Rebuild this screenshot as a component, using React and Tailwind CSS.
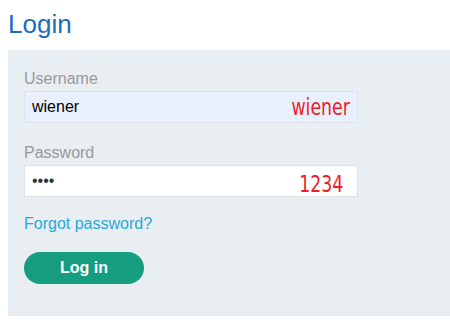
export default function App() {
  return (
    <div className="min-h-screen bg-white pl-2" style={{ fontFamily: '"Liberation Sans", Arial, sans-serif' }}>
      <h1 className="pt-[9px] text-[26px] leading-[30px] font-normal text-[#1a6dbd]">Login</h1>

      <div className="mt-[11px] bg-[#e8eef1] pl-4 pt-[17px] pb-8">
        <Field label="Username">
          <input
            readOnly
            value="wiener"
            className="h-8 w-[334px] border border-[#dde3e7] bg-[#e8f0fe] pl-[7px] text-[16px] text-black outline-none"
          />
          <Note className="right-2 top-[5px]">wiener</Note>
        </Field>

        <div className="mt-[18px]">
          <Field label="Password">
            <input
              readOnly
              type="password"
              value="1234"
              className="h-8 w-[334px] border border-[#dde3e7] bg-white pl-[7px] text-[16px] text-[#333] outline-none"
            />
            <Note className="right-[15px] top-[8px]">1234</Note>
          </Field>
        </div>

        <a href="#" className="mt-[15px] block w-fit text-[16px] leading-6 text-[#2aa7e0]">
          Forgot password?
        </a>

        <button className="mt-4 h-8 w-[120px] rounded-full bg-[#169c7f] text-[16px] font-bold text-white">
          Log in
        </button>
      </div>
    </div>
  )
}

function Field({ label, children }) {
  return (
    <div>
      <label className="block text-[16px] leading-6 text-[#999]">{label}</label>
      <div className="relative w-fit">{children}</div>
    </div>
  )
}

// red annotations drawn over the inputs
function Note({ className, children }) {
  return (
    <span
      className={`pointer-events-none absolute origin-right scale-x-[0.77] text-[22.5px] leading-[22.5px] text-[#ee1c25] ${className}`}
      style={{ fontFamily: '"DejaVu Sans", sans-serif' }}
    >
      {children}
    </span>
  )
}
